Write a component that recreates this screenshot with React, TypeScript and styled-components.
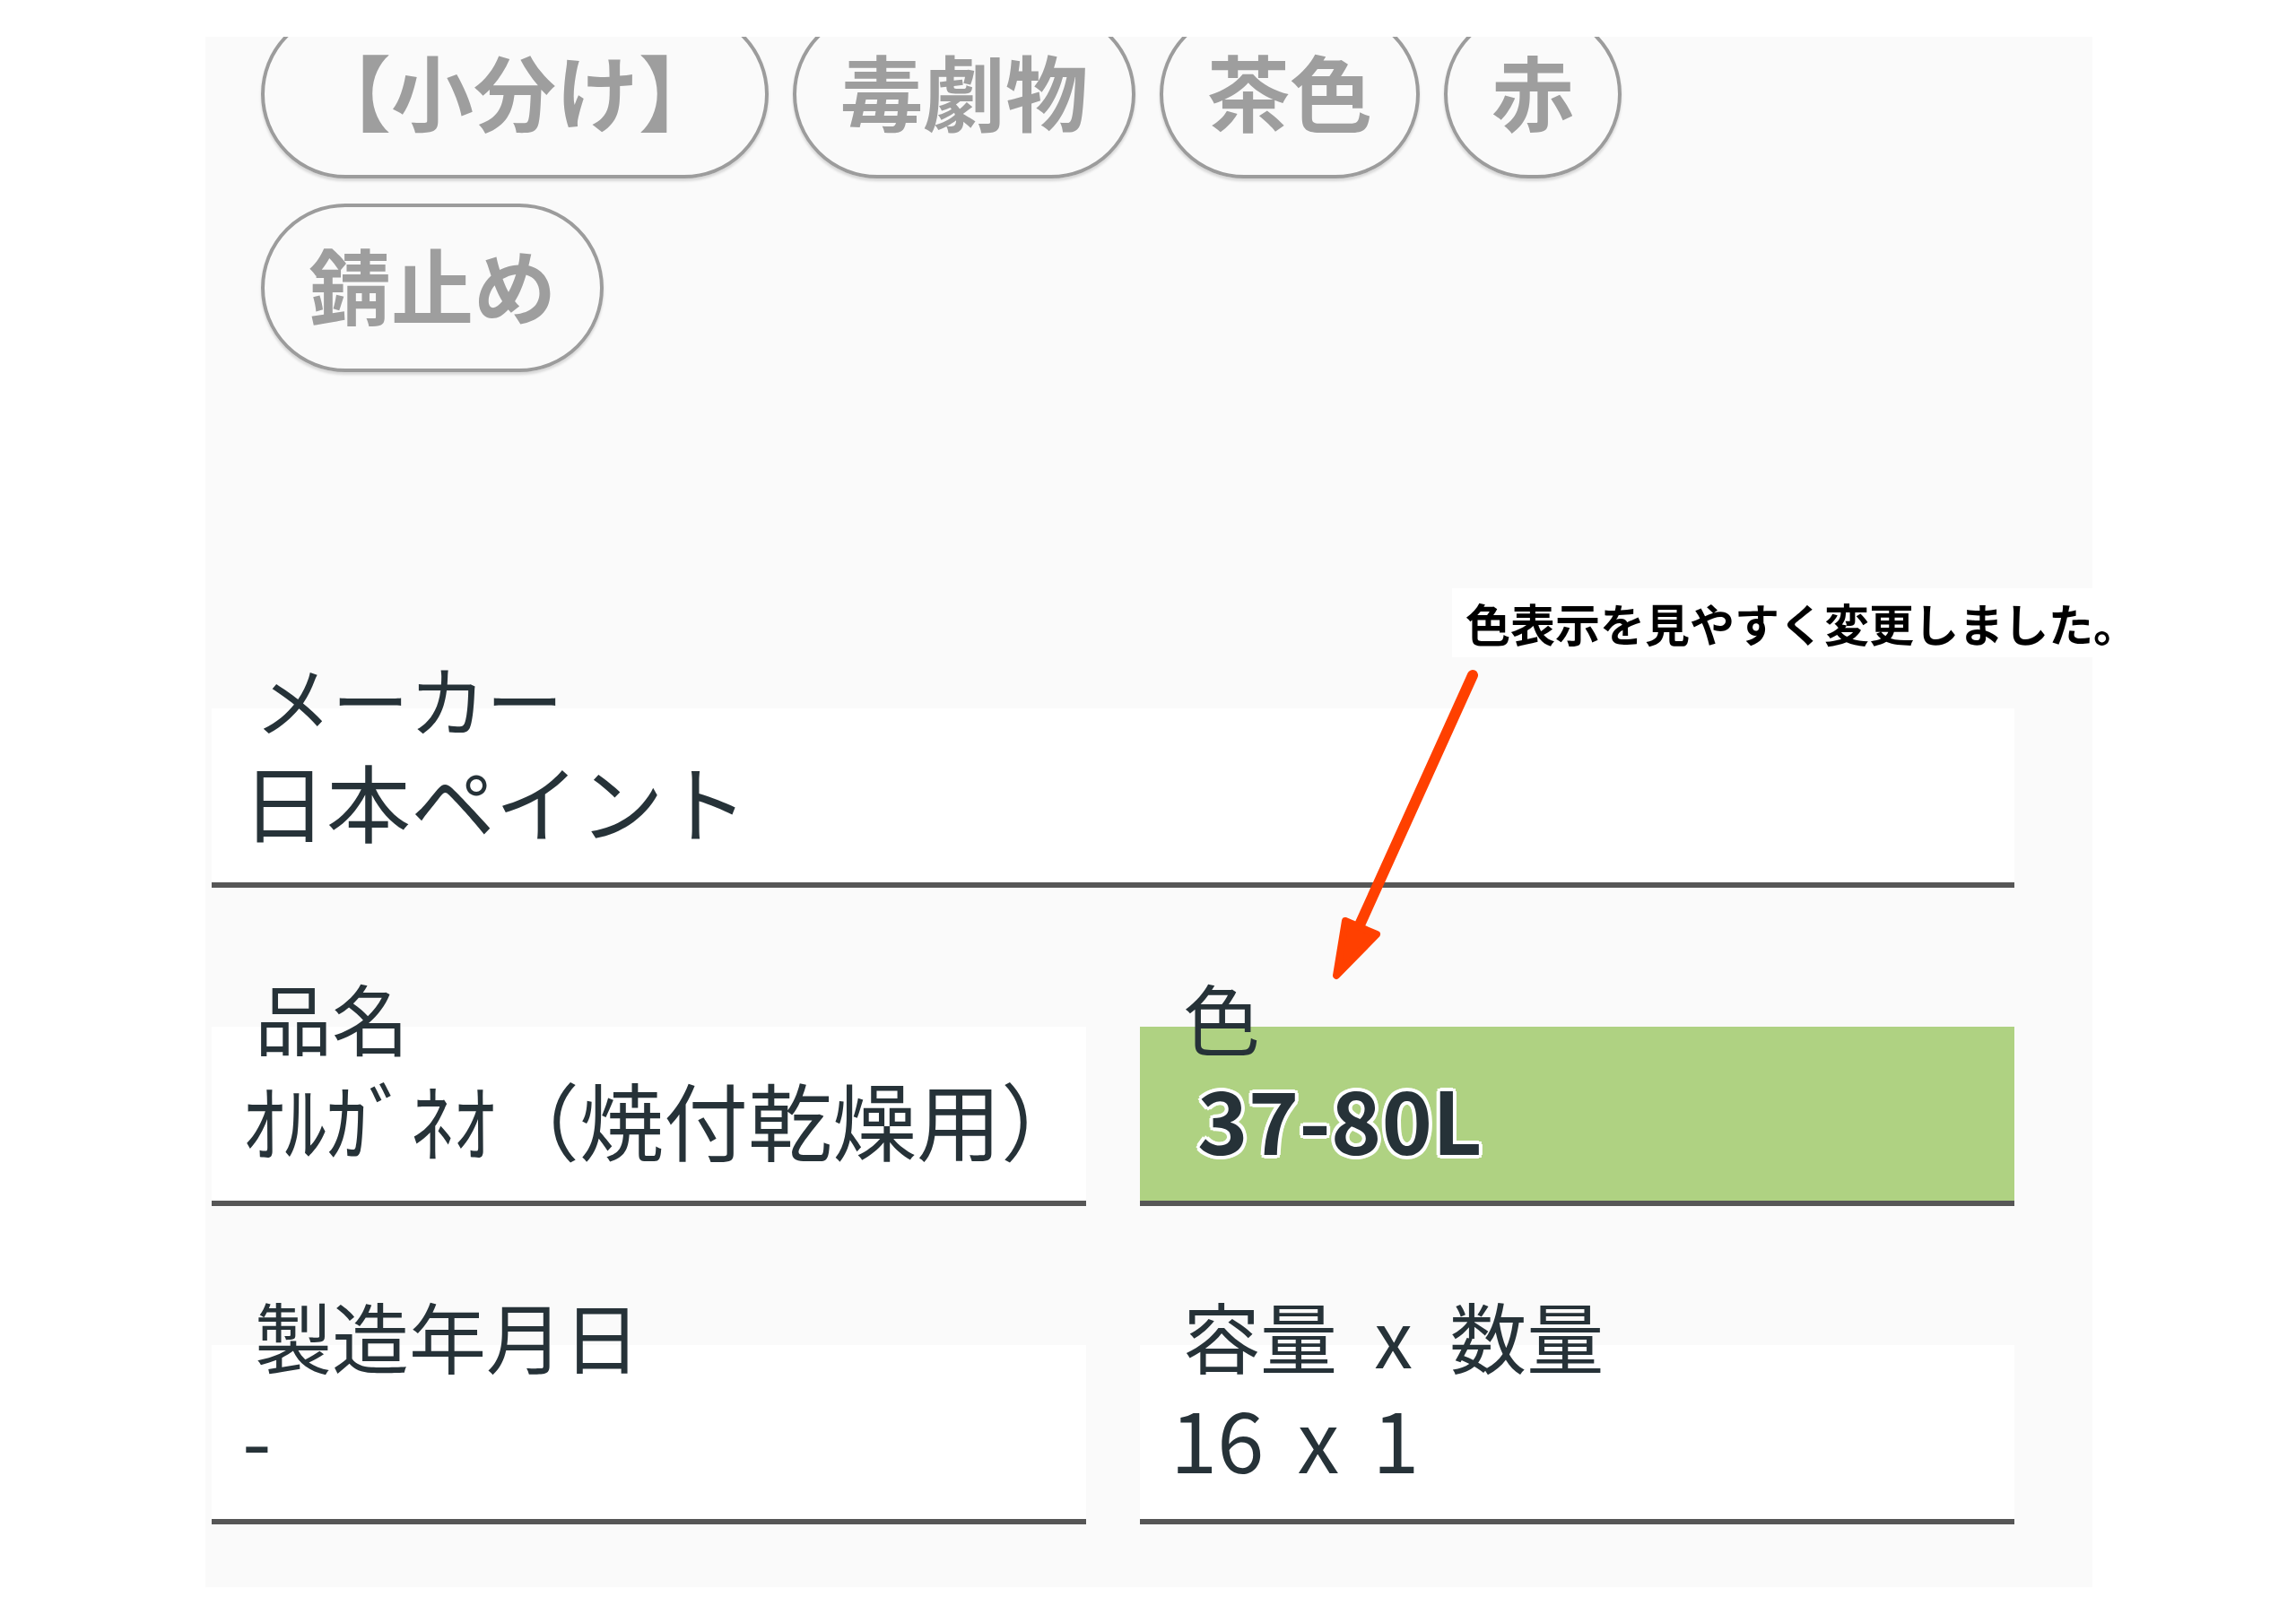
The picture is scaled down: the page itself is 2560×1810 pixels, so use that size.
import styled, { createGlobalStyle } from "styled-components";

const GlobalStyle = createGlobalStyle`
  html, body {
    margin: 0;
    padding: 0;
    background: #ffffff;
  }
  body {
    font-family: "Noto Sans CJK JP", "Noto Sans", sans-serif;
  }
`;

const Page = styled.div`
  position: relative;
  width: 2560px;
  height: 1810px;
  padding: 41px 0 0 229px;
  box-sizing: border-box;
`;

const Panel = styled.section`
  width: 2104px;
  height: 1729px;
  background: #fafafa;
  overflow: hidden;
`;

const Chips = styled.ul`
  list-style: none;
  margin: -30px 0 0;
  padding: 0 0 0 62px;
  max-width: 1600px;
  display: flex;
  flex-wrap: wrap;
  gap: 28px 27px;
`;

const Chip = styled.li`
  height: 188px;
  box-sizing: border-box;
  padding: 0 49px 10px;
  border: 4px solid #9c9c9c;
  border-radius: 94px;
  display: flex;
  align-items: center;
  font-size: 92px;
  font-weight: 700;
  line-height: 1;
  color: #9e9e9e;
  box-shadow: 0 3px 3px rgba(0, 0, 0, 0.14);
`;

const Fields = styled.div`
  margin-top: 321px;
  padding: 0 87px 0 7px;
  display: grid;
  grid-template-columns: 1fr 1fr;
  column-gap: 60px;
  row-gap: 101px;
`;

const Field = styled.div<{ $wide?: boolean }>`
  grid-column: ${(p) => (p.$wide ? "span 2" : "auto")};
  display: flex;
  flex-direction: column;
`;

const Label = styled.div`
  position: relative;
  z-index: 1;
  height: 86px;
  margin-bottom: -32px;
  padding-left: 48px;
  font-size: 86px;
  line-height: 86px;
  word-spacing: 22px;
  color: #263238;
`;

const ValueBox = styled.div<{ $bg?: string }>`
  height: 200px;
  box-sizing: border-box;
  padding: 55px 0 0 34px;
  background: ${(p) => p.$bg || "#ffffff"};
  border-bottom: 6px solid #565656;
`;

const Value = styled.div<{ $swatch?: boolean }>`
  font-size: ${(p) => (p.$swatch ? "96px" : "94px")};
  line-height: 94px;
  font-weight: ${(p) => (p.$swatch ? 700 : 400)};
  color: #263238;
  white-space: nowrap;
  word-spacing: 16px;
  padding-left: ${(p) => (p.$swatch ? "30px" : "0")};
  text-shadow: ${(p) =>
    p.$swatch
      ? "4px 0 0 #fff, -4px 0 0 #fff, 0 4px 0 #fff, 0 -4px 0 #fff, 3px 3px 0 #fff, -3px -3px 0 #fff, 3px -3px 0 #fff, -3px 3px 0 #fff"
      : "none"};
`;

const Note = styled.div`
  position: absolute;
  left: 1619px;
  top: 656px;
  width: 740px;
  height: 77px;
  box-sizing: border-box;
  padding-left: 15px;
  background: #ffffff;
  font-size: 50px;
  line-height: 77px;
  font-weight: 700;
  color: #000000;
  white-space: nowrap;
`;

const Arrow = styled.svg`
  position: absolute;
  left: 1460px;
  top: 730px;
  overflow: visible;
`;

const tags = ["【小分け】", "毒劇物", "茶色", "赤", "錆止め"];

export default function App() {
  return (
    <>
      <GlobalStyle />
      <Page>
        <Panel>
          <Chips>
            {tags.map((t) => (
              <Chip key={t}>{t}</Chip>
            ))}
          </Chips>
          <Fields>
            <Field $wide>
              <Label>メーカー</Label>
              <ValueBox>
                <Value>日本ペイント</Value>
              </ValueBox>
            </Field>
            <Field>
              <Label>品名</Label>
              <ValueBox>
                <Value>ｵﾙｶﾞﾈｵ（焼付乾燥用）</Value>
              </ValueBox>
            </Field>
            <Field>
              <Label>色</Label>
              <ValueBox $bg="#afd282">
                <Value $swatch>37-80L</Value>
              </ValueBox>
            </Field>
            <Field>
              <Label>製造年月日</Label>
              <ValueBox>
                <Value>-</Value>
              </ValueBox>
            </Field>
            <Field>
              <Label>容量 x 数量</Label>
              <ValueBox>
                <Value>16 x 1</Value>
              </ValueBox>
            </Field>
          </Fields>
        </Panel>
        <Note>色表示を見やすく変更しました。</Note>
        <Arrow width="220" height="380" viewBox="1460 730 220 380">
          <line x1="1642" y1="753" x2="1514" y2="1036" stroke="#ff4000" strokeWidth="12" strokeLinecap="round" />
          <polygon points="1490,1088 1500,1027 1535,1042" fill="#ff4000" stroke="#ff4000" strokeWidth="8" strokeLinejoin="round" />
        </Arrow>
      </Page>
    </>
  );
}
